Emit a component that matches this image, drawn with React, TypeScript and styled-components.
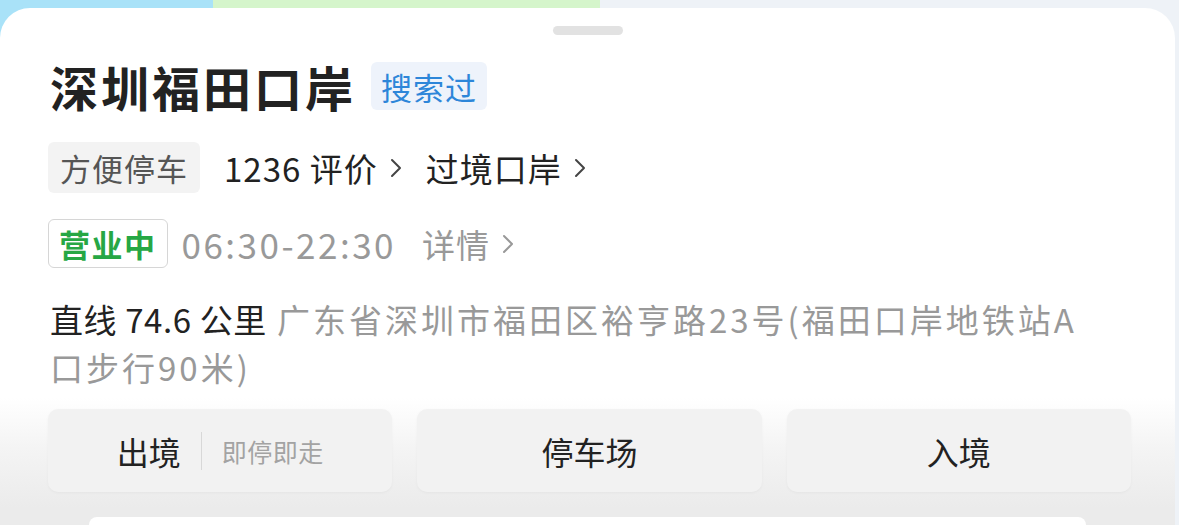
import styled, { createGlobalStyle } from 'styled-components';

const GlobalStyle = createGlobalStyle`
  html, body {
    margin: 0;
    padding: 0;
  }
  body {
    font-family: "Noto Sans CJK SC", "Noto Sans", sans-serif;
    background: #ececec;
  }
`;

const Page = styled.div`
  width: 1179px;
  height: 525px;
  overflow: hidden;
  padding-top: 8px;
  box-sizing: border-box;
  background:
    linear-gradient(to right, #a9e2f8 0 213px, #d5f5cb 213px 600px, #eef2f7 600px 100%);
`;

const Sheet = styled.div`
  margin-right: 4px;
  height: 100%;
  border-radius: 30px 30px 0 0;
  background: linear-gradient(to bottom, #ffffff 0 390px, #f4f4f4 440px, #ebebeb 500px);
  display: flex;
  flex-direction: column;
  padding: 0 48px;
`;

const Handle = styled.div`
  align-self: center;
  width: 70px;
  height: 9px;
  border-radius: 5px;
  background: #e2e2e2;
  margin-top: 18px;
`;

const TitleRow = styled.div`
  display: flex;
  align-items: center;
  height: 52px;
  margin-top: 25px;
  gap: 15px;
`;

const Title = styled.h1`
  margin: 0;
  font-size: 48px;
  font-weight: 700;
  letter-spacing: 3px;
  color: #222;
  line-height: 52px;
  padding-left: 2px;
`;

const Tag = styled.span<{ $tone: 'blue' | 'gray' | 'green' }>`
  display: inline-flex;
  align-items: center;
  box-sizing: border-box;
  padding: 0 10px;
  border-radius: 6px;
  font-size: 31px;
  letter-spacing: 1px;
  white-space: nowrap;
  ${({ $tone }) =>
    $tone === 'blue'
      ? `background: #eef3fb; color: #2d86d9; height: 48px;`
      : $tone === 'gray'
      ? `background: #f3f3f3; color: #555; height: 51px; padding: 0 12px;`
      : `background: #fff; color: #26a744; height: 49px; border: 1.5px solid #d6d6d6; font-weight: 700; padding: 0 10px; letter-spacing: 1.5px;`}
`;

const InfoRow = styled.div<{ $top: number; $gap: number }>`
  display: flex;
  align-items: center;
  margin-top: ${({ $top }) => $top}px;
  gap: ${({ $gap }) => $gap}px;
`;

const LinkText = styled.span<{ $muted?: boolean }>`
  display: inline-flex;
  align-items: center;
  gap: 12px;
  font-size: 33px;
  letter-spacing: 1px;
  color: ${({ $muted }) => ($muted ? '#999' : '#222')};
  white-space: nowrap;
`;

const Hours = styled.span`
  font-size: 35px;
  color: #999;
  letter-spacing: 2.5px;
  margin-right: 12px;
`;

const Address = styled.p`
  margin: 26px 0 0;
  font-size: 33px;
  line-height: 48px;
  color: #999;
  letter-spacing: 3px;
  padding-left: 2px;
  width: 1050px;
`;

const Distance = styled.span`
  color: #222;
  letter-spacing: 0.6px;
  margin-right: 10px;
`;

const Street = styled.span`
  color: #999;
`;

const ButtonRow = styled.div`
  display: grid;
  grid-template-columns: repeat(3, 1fr);
  gap: 25px;
  margin-top: 18px;
  width: 1083px;
`;

const ActionButton = styled.div`
  height: 83px;
  border-radius: 10px;
  background: #f2f2f2;
  box-shadow: 0 1px 3px rgba(0, 0, 0, 0.04);
  display: flex;
  align-items: center;
  justify-content: center;
  font-size: 32px;
  color: #222;
  gap: 20px;
`;

const Divider = styled.span`
  width: 1px;
  height: 38px;
  background: #d8d8d8;
`;

const SubLabel = styled.span`
  font-size: 25px;
  color: #a3a3a3;
  letter-spacing: 0.5px;
`;

const LowerCard = styled.div`
  margin: 25px 41px 0;
  flex: 1;
  background: #fff;
  border-radius: 26px 26px 0 0;
`;

function Chevron({ color }: { color: string }) {
  return (
    <svg width="12" height="22" viewBox="0 0 12 22" fill="none">
      <path d="M2 3 L10 11 L2 19" stroke={color} strokeWidth="2" strokeLinecap="round" strokeLinejoin="round" />
    </svg>
  );
}

export default function App() {
  return (
    <>
      <GlobalStyle />
      <Page>
        <Sheet>
          <Handle />
          <TitleRow>
            <Title>深圳福田口岸</Title>
            <Tag $tone="blue">搜索过</Tag>
          </TitleRow>
          <InfoRow $top={30} $gap={24}>
            <Tag $tone="gray">方便停车</Tag>
            <LinkText>
              1236 评价 <Chevron color="#444" />
            </LinkText>
            <LinkText>
              过境口岸 <Chevron color="#444" />
            </LinkText>
          </InfoRow>
          <InfoRow $top={25} $gap={14}>
            <Tag $tone="green">营业中</Tag>
            <Hours>06:30-22:30</Hours>
            <LinkText $muted>
              详情 <Chevron color="#999" />
            </LinkText>
          </InfoRow>
          <Address>
            <Distance>直线 74.6 公里</Distance>
            <Street>广东省深圳市福田区裕亨路23号(福田口岸地铁站A口步行90米)</Street>
          </Address>
          <ButtonRow>
            <ActionButton>
              出境
              <Divider />
              <SubLabel>即停即走</SubLabel>
            </ActionButton>
            <ActionButton>停车场</ActionButton>
            <ActionButton>入境</ActionButton>
          </ButtonRow>
          <LowerCard />
        </Sheet>
      </Page>
    </>
  );
}
